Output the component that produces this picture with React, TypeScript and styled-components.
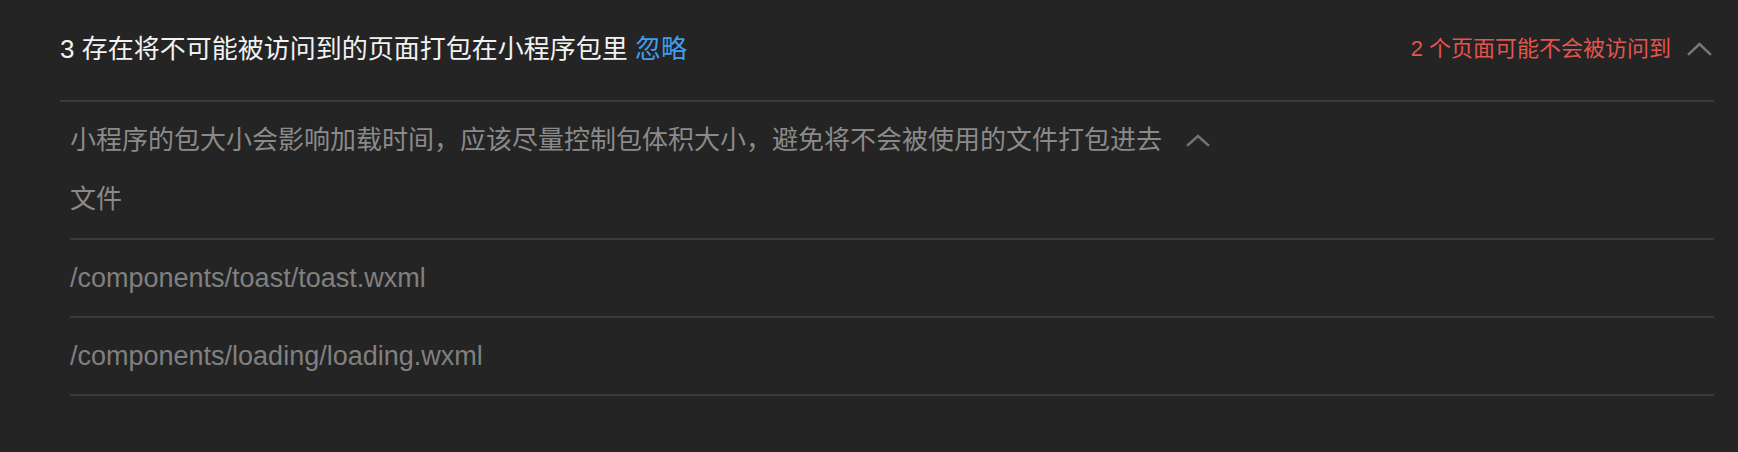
import React from "react";
import styled, { createGlobalStyle } from "styled-components";

const GlobalStyle = createGlobalStyle`
  html, body {
    margin: 0;
    padding: 0;
    background: #242424;
  }
  body {
    font-family: "Liberation Sans", "Noto Sans CJK SC", sans-serif;
  }
`;

const Panel = styled.section`
  background: #242424;
  min-height: 452px;
  padding: 0 24px 0 60px;
  box-sizing: border-box;
`;

const Header = styled.div`
  display: flex;
  align-items: center;
  justify-content: space-between;
  height: 102px;
  padding-bottom: 2px;
  box-sizing: border-box;
  border-bottom: 2px solid #3a3a3a;
`;

const Title = styled.h2`
  margin: 0;
  font-size: 26px;
  font-weight: 400;
  line-height: 40px;
  color: #f2f2f2;
`;

const IgnoreLink = styled.a`
  color: #3f9fea;
  cursor: pointer;
`;

const Summary = styled.div`
  display: flex;
  align-items: center;
  gap: 16px;
  padding-right: 2px;
`;

const Warning = styled.span`
  font-size: 22px;
  line-height: 30px;
  color: #e2554f;
`;

const Chevron = styled.svg<{ $color: string }>`
  display: block;
  fill: none;
  stroke: ${(p) => p.$color};
  stroke-width: 2.6;
  stroke-linecap: square;
`;

const Body = styled.div`
  padding-left: 10px;
`;

const Intro = styled.div`
  padding: 18px 0 19px;
  border-bottom: 2px solid #3a3a3a;
`;

const DescRow = styled.div`
  display: flex;
  align-items: center;
  gap: 24px;
  height: 40px;
`;

const Desc = styled.p`
  margin: 0;
  font-size: 26px;
  line-height: 40px;
  color: #8a8a8a;
`;

const ColumnHead = styled.div`
  margin-top: 19px;
  font-size: 26px;
  line-height: 40px;
  color: #8a8a8a;
`;

const FileRow = styled.div`
  display: flex;
  align-items: center;
  height: 76px;
  border-bottom: 2px solid #3a3a3a;
  font-size: 27px;
  color: #808080;
`;

const files = [
  "/components/toast/toast.wxml",
  "/components/loading/loading.wxml",
];

const Up = ({ w, h, color }: { w: number; h: number; color: string }) => (
  <Chevron $color={color} width={w} height={h} viewBox={`0 0 ${w} ${h}`}>
    <polyline points={`2,${h - 2} ${w / 2},2 ${w - 2},${h - 2}`} />
  </Chevron>
);

export default function App() {
  return (
    <>
      <GlobalStyle />
      <Panel>
        <Header>
          <Title>
            3 存在将不可能被访问到的页面打包在小程序包里 <IgnoreLink>忽略</IgnoreLink>
          </Title>
          <Summary>
            <Warning>2 个页面可能不会被访问到</Warning>
            <Up w={25} h={14} color="#767676" />
          </Summary>
        </Header>
        <Body>
          <Intro>
            <DescRow>
              <Desc>小程序的包大小会影响加载时间，应该尽量控制包体积大小，避免将不会被使用的文件打包进去</Desc>
              <Up w={24} h={13} color="#727272" />
            </DescRow>
            <ColumnHead>文件</ColumnHead>
          </Intro>
          {files.map((f) => (
            <FileRow key={f}>{f}</FileRow>
          ))}
        </Body>
      </Panel>
    </>
  );
}
